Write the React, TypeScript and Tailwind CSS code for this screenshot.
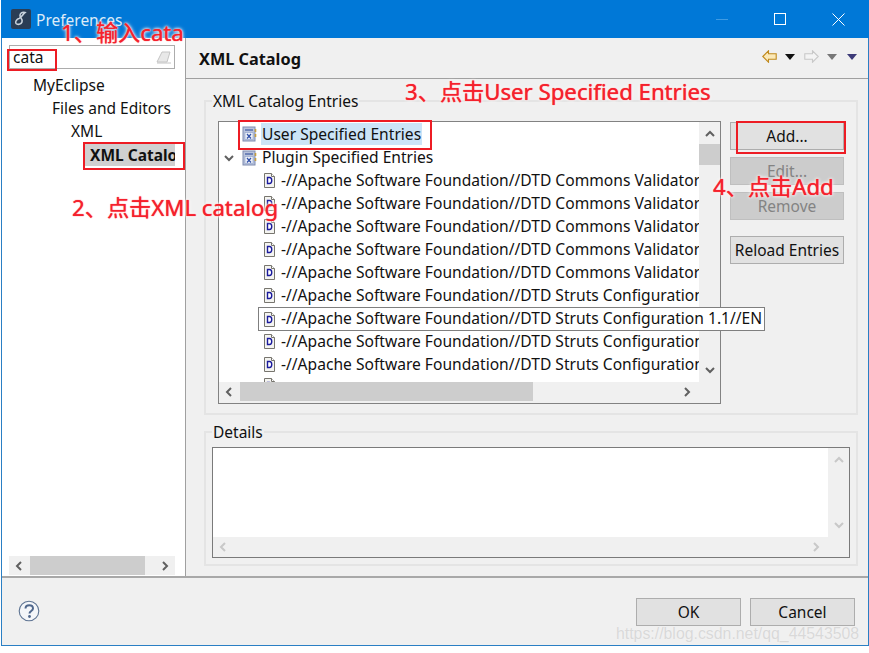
import React from "react";

const CatalogIcon = () => (
  <svg width="16" height="16" viewBox="0 0 16 16" className="shrink-0">
    <rect x="1" y="1" width="12" height="14" fill="#b9c3dc" stroke="#7f8cb0" />
    <rect x="3" y="3" width="8" height="2" fill="#6f83b8" />
    <rect x="3" y="6.5" width="8" height="7" fill="#eef1f8" stroke="#8ea0c8" strokeWidth="0.6" />
    <path d="M5 8l4 4.5M9 8l-4 4.5" stroke="#2f4fa8" strokeWidth="1.2" />
    <path d="M13.5 3v3M13.5 8v3" stroke="#c9a03c" strokeWidth="1.6" />
  </svg>
);

const DocIcon = () => (
  <svg width="11" height="15" viewBox="0 0 11 15" className="shrink-0">
    <path d="M.5.5h7l3 3v11H.5z" fill="#f4f4f0" stroke="#77756e" />
    <path d="M7.5.5v3h3" fill="#fff" stroke="#77756e" />
    <path d="M3.5 4.5h2c3 0 3 6 0 6h-2z" fill="#fff" stroke="#1b1b9c" strokeWidth="1.4" />
  </svg>
);

const Chevron = ({ dir, color = "#606060" }: { dir: "l" | "r" | "u" | "d"; color?: string }) => {
  const d = { l: "M7 2L3 6l4 4", r: "M4 2l4 4-4 4", u: "M2 8l4-4 4 4", d: "M2 4l4 4 4-4" }[dir];
  return (
    <svg width="12" height="12" viewBox="0 0 12 12">
      <path d={d} fill="none" stroke={color} strokeWidth="2" />
    </svg>
  );
};

const Tri = ({ color }: { color: string }) => (
  <svg width="10" height="6" viewBox="0 0 10 6">
    <path d="M0 0h10L5 6z" fill={color} />
  </svg>
);

const Arrow = ({ fill, stroke, flip }: { fill: string; stroke: string; flip?: boolean }) => (
  <svg width="15" height="13" viewBox="0 0 15 13" className={flip ? "-scale-x-100" : ""}>
    <path d="M.8 6.5L6.5.8v3h7.7v5.4H6.500v3z" fill={fill} stroke={stroke} strokeWidth="1.1" />
  </svg>
);

const Btn = ({ children, disabled, cls }: { children: React.ReactNode; disabled?: boolean; cls: string }) => (
  <div
    className={`flex h-[28px] items-center justify-center border pt-[2px] text-[15.5px] ${
      disabled ? "border-[#bfbfbf] bg-[#cccccc] text-[#838383]" : "border-[#adadad] bg-[#e1e1e1] text-[#111111]"
    } ${cls}`}
  >
    {children}
  </div>
);

const rows = [
  "Commons Validator 1.0//EN",
  "Commons Validator 1.0.1//EN",
  "Commons Validator 1.1//EN",
  "Commons Validator 1.1.3//EN",
  "Commons Validator 1.2.0//EN",
  "Struts Configuration 1.0//EN",
  "Struts Configuration 1.1//EN",
  "Struts Configuration 1.2//EN",
  "Struts Configuration 1.3//EN",
];

const Note = ({ cls, children }: { cls: string; children: React.ReactNode }) => (
  <div
    className={`absolute whitespace-nowrap text-[22.2px] leading-[30px] text-[#f5212d] [text-shadow:0_0_1px_#f5212d,0_0_2px_#fff,0_0_3px_#fff,0_0_4px_#fff] ${cls}`}
    style={{ fontFamily: '"Noto Sans","Noto Sans CJK SC",sans-serif' }}
  >
    {children}
  </div>
);

const RedBox = ({ cls }: { cls: string }) => <div className={`absolute border-2 border-[#ed1c24] ${cls}`} />;

export default function App() {
  return (
    <div
      className="relative h-[653px] w-[869px] overflow-hidden bg-white text-[15.5px] text-[#111111]"
      style={{ fontFamily: '"Noto Sans","Open Sans",sans-serif' }}
    >
      <div className="ml-[1px] flex h-[646px] flex-col border-x border-b border-[#2a7fc4] bg-[#f0f0f0]">
        {/* Title bar */}
        <div className="-mx-[1px] flex h-[38px] shrink-0 items-center bg-[#0078d7] pl-[10px] pr-[2px] text-white">
          <svg width="20" height="20" viewBox="0 0 20 20" className="shrink-0">
            <rect width="20" height="20" rx="2" fill="#2a3d55" />
            <path d="M14 3.500c-3-1-5 1-5 3 0 3 3 3 2 6.500-.7 2.500-4.500 3-6 1.500-1.300-1.500 1-4.500 3-5 2.500-.7 4-4.500 6-6z" fill="none" stroke="#c9d3dd" strokeWidth="1.6" />
          </svg>
          <span className="ml-[5px] pt-[3px] text-[15.5px] text-[#dcebf8]">Preferences</span>
          <div className="ml-auto flex items-center">
            <div className="flex w-[58px] justify-center">
              <div className="h-px w-[12px] bg-[#3f9be3]" />
            </div>
            <div className="flex w-[58px] justify-center">
              <div className="h-[12px] w-[12px] border border-white" />
            </div>
            <div className="flex w-[58px] justify-center">
              <svg width="13" height="13" viewBox="0 0 13 13">
                <path d="M.5.500l12 12M12.500.500l-12 12" stroke="#fff" strokeWidth="1" />
              </svg>
            </div>
          </div>
        </div>

        {/* Body */}
        <div className="flex min-h-0 flex-1">
          {/* Left panel */}
          <div className="flex w-[184px] shrink-0 flex-col border-r border-[#a0a0a0] bg-white">
            <div className="ml-[7px] mt-[7px] flex h-[24px] w-[166px] items-center justify-between border border-[#acacac] pl-[3px] pr-[2px]">
              <span className="pt-[2px]">cata</span>
              <svg width="16" height="13" viewBox="0 0 16 13">
                <path d="M1 11L6 1h8l-3 10z" fill="#e8e8e8" stroke="#c4c4c4" />
                <path d="M1 12h14" stroke="#c4c4c4" />
              </svg>
            </div>
            <div className="mt-[5px] flex-1 overflow-hidden">
              <div className="flex h-[23px] items-center pl-[31px]">MyEclipse</div>
              <div className="flex h-[23px] items-center pl-[50px]">Files and Editors</div>
              <div className="flex h-[23px] items-center pl-[69px]">XML</div>
              <div className="flex h-[23px] items-center pl-[82px]">
                <div className="w-[91px] overflow-hidden whitespace-nowrap bg-[#d0d0d0] pl-[6px] font-bold leading-[22px]">
                  XML Catalog
                </div>
              </div>
            </div>
            <div className="mb-[1px] ml-[7px] flex h-[19px] w-[166px] items-center bg-[#f0f0f0]">
              <div className="flex w-[21px] justify-center"><Chevron dir="l" /></div>
              <div className="h-full w-[115px] bg-[#cdcdcd]" />
              <div className="ml-auto flex w-[21px] justify-center"><Chevron dir="r" /></div>
            </div>
          </div>

          {/* Right panel */}
          <div className="flex min-w-0 flex-1 flex-col">
            <div className="flex h-[41px] shrink-0 items-center border-b border-[#a0a0a0] pl-[13px] pr-[11px]">
              <span className="pt-[2px] text-[16.3px] font-bold">XML Catalog</span>
              <div className="ml-auto flex items-center pb-[3px]">
                <Arrow fill="#fbe9b8" stroke="#c08a1e" />
                <div className="ml-[8px]"><Tri color="#111111" /></div>
                <div className="ml-[9px]"><Arrow fill="#f4f4f4" stroke="#c8c8c8" flip /></div>
                <div className="ml-[8px]"><Tri color="#777777" /></div>
                <div className="ml-[10px]"><Tri color="#3c3a78" /></div>
              </div>
            </div>

            <div className="flex flex-1 flex-col pl-[18px] pr-[10px]">
              <fieldset className="mt-[12px] h-[324px] shrink-0 border-2 border-[#e4e4e4] px-[12px] pt-[10px]">
                <legend className="-ml-[6px] px-[1px] leading-[20px]">XML Catalog Entries</legend>
                <div className="flex gap-[9px]">
                  <div className="relative h-[283px] w-[503px] shrink-0 border border-[#828282] bg-[#f0f0f0] text-[15.6px]">
                    <div className="flex h-[260px]">
                      <div className="w-[480px] overflow-hidden bg-white pt-[1px]">
                        <div className="flex h-[23px] items-center pb-[2px] pl-[23px]">
                          <CatalogIcon />
                          <span className="ml-[3px] whitespace-nowrap bg-[#cce4f7] px-[1px] leading-[22px]">User Specified Entries</span>
                        </div>
                        <div className="flex h-[23px] items-center">
                          <div className="mr-[3px] flex w-[20px] justify-center"><Chevron dir="d" /></div>
                          <CatalogIcon />
                          <span className="ml-[4px] whitespace-nowrap">Plugin Specified Entries</span>
                        </div>
                        {rows.map((r) => (
                          <div key={r} className="flex h-[23px] items-center whitespace-nowrap pl-[45px]">
                            <DocIcon />
                            <span className="ml-[6px]">-//Apache Software Foundation//DTD {r}</span>
                          </div>
                        ))}
                        <div className="mt-[2px] pl-[45px]"><DocIcon /></div>
                      </div>
                      <div className="flex w-[21px] flex-col items-center pt-[6px]">
                        <Chevron dir="u" />
                        <div className="mt-[4px] h-[21px] w-full bg-[#cdcdcd]" />
                        <div className="mb-[6px] mt-auto"><Chevron dir="d" /></div>
                      </div>
                    </div>
                    <div className="flex h-[19px] w-[480px] items-center bg-[#f0f0f0]">
                      <div className="flex w-[21px] justify-center"><Chevron dir="l" /></div>
                      <div className="h-full w-[293px] bg-[#cdcdcd]" />
                      <div className="ml-auto flex w-[24px] justify-center"><Chevron dir="r" /></div>
                    </div>
                    <div className="absolute left-[39px] top-[185px] flex h-[24px] w-[507px] items-center whitespace-nowrap border border-[#7f7f7f] bg-white pl-[5px]">
                      <DocIcon />
                      <span className="ml-[6px]">-//Apache Software Foundation//DTD Struts Configuration 1.1//EN</span>
                    </div>
                  </div>
                  <div className="flex w-[114px] shrink-0 flex-col pt-[1px]">
                    <Btn cls="">Add...</Btn>
                    <Btn disabled cls="mt-[7px]">Edit...</Btn>
                    <Btn disabled cls="mt-[7px]">Remove</Btn>
                    <Btn cls="mt-[16px]">Reload Entries</Btn>
                  </div>
                </div>
              </fieldset>

              <fieldset className="mt-[7px] h-[144px] shrink-0 border-2 border-[#e4e4e4] px-[6px] pt-[5px]">
                <legend className="px-[1px] leading-[20px]">Details</legend>
                <div className="h-[111px] border border-[#7a7a7a] bg-[#f0f0f0]">
                  <div className="flex h-[89px]">
                    <div className="flex-1 bg-white" />
                    <div className="flex w-[21px] flex-col items-center py-[6px]">
                      <Chevron dir="u" color="#c8c8c8" />
                      <div className="mt-auto"><Chevron dir="d" color="#c8c8c8" /></div>
                    </div>
                  </div>
                  <div className="flex h-[20px] items-center justify-between pl-[5px] pr-[27px]">
                    <Chevron dir="l" color="#c8c8c8" />
                    <Chevron dir="r" color="#c8c8c8" />
                  </div>
                </div>
              </fieldset>
            </div>
          </div>
        </div>

        {/* Footer */}
        <div className="flex h-[69px] shrink-0 items-center border-t-2 border-[#a8a8a8] pl-[16px] pr-[13px]">
          <svg width="22" height="22" viewBox="0 0 22 22" className="-mt-[2px]">
            <circle cx="11" cy="11" r="9.800" fill="#f4f6f9" stroke="#5d7392" strokeWidth="1.100" />
            <path d="M7.500 8.500c0-4.500 7.500-4.500 7.500 0 0 2.500-3.500 2.500-3.500 5" fill="none" stroke="#4f678c" strokeWidth="2" />
            <circle cx="11.500" cy="16.500" r="1.400" fill="#4f678c" />
          </svg>
          <div className="ml-auto flex gap-[9px]">
            <Btn cls="w-[105px]">OK</Btn>
            <Btn cls="w-[105px]">Cancel</Btn>
          </div>
        </div>
      </div>

      {/* Annotation overlays */}
      <RedBox cls="left-[7px] top-[49px] h-[22px] w-[50px]" />
      <RedBox cls="left-[83px] top-[142px] h-[28px] w-[102px]" />
      <RedBox cls="left-[238px] top-[120px] h-[30px] w-[194px]" />
      <RedBox cls="left-[736px] top-[121px] h-[33px] w-[110px]" />
      <Note cls="left-[61px] top-[18px]">1、输入cata</Note>
      <Note cls="left-[72px] top-[193px]">2、点击XML catalog</Note>
      <Note cls="left-[405px] top-[77px]">3、点击User Specified Entries</Note>
      <Note cls="left-[713px] top-[172px]">4、点击Add</Note>
      <div
        className="absolute left-[616px] top-[624px] whitespace-nowrap text-[15.85px] leading-[20px] text-[#d9d9d9] [text-shadow:0_0_1px_#f8f8f8]"
        style={{ fontFamily: '"Liberation Sans",sans-serif' }}
      >
        https://blog.csdn.net/qq_44543508
      </div>
    </div>
  );
}
